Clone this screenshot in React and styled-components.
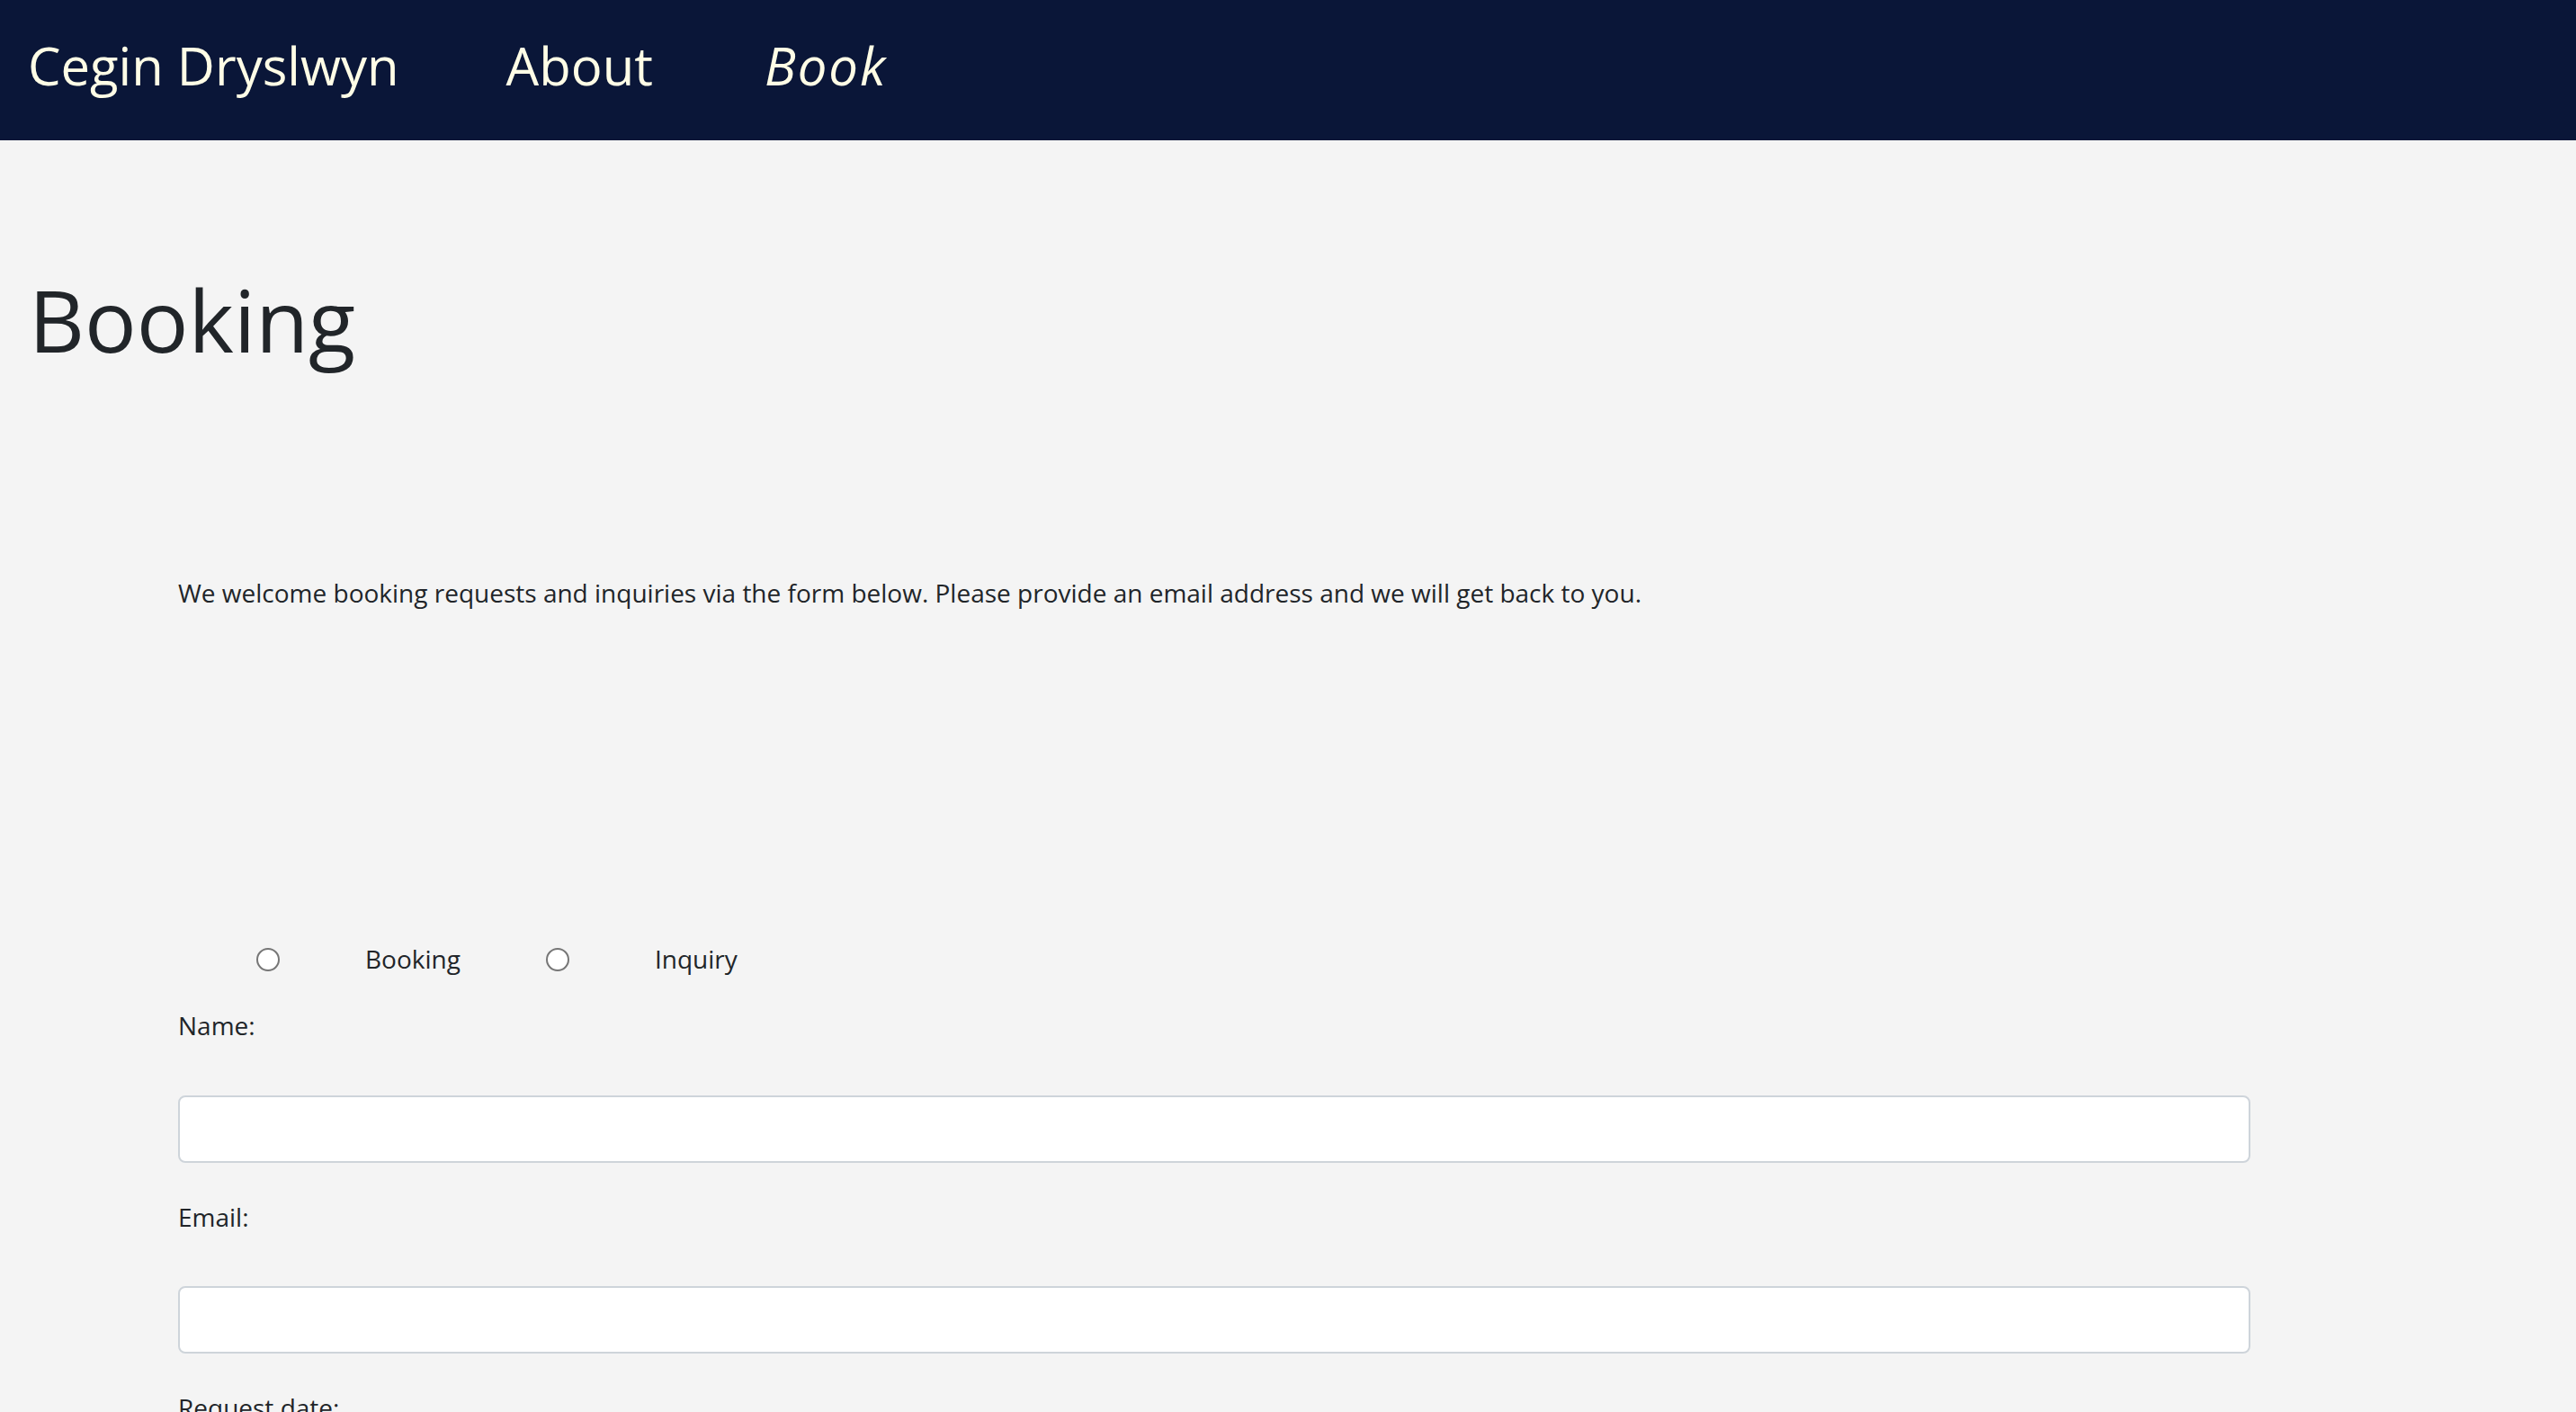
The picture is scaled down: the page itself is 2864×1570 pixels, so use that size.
import styled, { createGlobalStyle } from 'styled-components';

const GlobalStyle = createGlobalStyle`
  html, body {
    margin: 0;
    padding: 0;
    background: #f4f4f4;
  }
  body {
    font-family: "Open Sans", "Noto Sans", sans-serif;
    color: #212529;
  }
  * {
    box-sizing: border-box;
  }
`;

const Navbar = styled.nav`
  height: 156px;
  background-color: #0a1638;
  display: flex;
  align-items: flex-start;
  gap: 119px;
  padding: 29px 0 0 31px;
`;

const NavLink = styled.a`
  font-size: 58px;
  line-height: 87px;
  color: #fffde6;
  text-decoration: none;
  cursor: pointer;
  ${(p) =>
    p.$active &&
    `
    font-style: italic;
    margin-left: 5px;
    letter-spacing: 2px;
  `}
`;

const PageTitle = styled.h1`
  margin: 139px 0 0;
  padding-left: 32px;
  font-size: 96px;
  line-height: 120px;
  font-weight: 400;
  color: #212529;
`;

const Content = styled.section`
  padding-left: 198px;
  width: 2502px;
`;

const Intro = styled.p`
  margin: 223px 0 0;
  font-size: 28px;
  line-height: 43.2px;
`;

const ChoiceRow = styled.div`
  margin-top: 364px;
  display: flex;
  align-items: center;
  gap: 95px;
  padding-left: 87px;
`;

const Radio = styled.input`
  appearance: none;
  width: 26px;
  height: 26px;
  margin: 0;
  border: 2px solid #767676;
  border-radius: 50%;
  background: #fff;
`;

const ChoiceLabel = styled.label`
  font-size: 28px;
  line-height: 43.2px;
`;

const FieldLabel = styled.label`
  display: block;
  font-size: 28px;
  line-height: 43.2px;
  margin-top: ${(p) => p.$top || '39px'};
  margin-bottom: 55px;
`;

const TextInput = styled.input`
  display: block;
  width: 100%;
  height: 75px;
  padding: 12px 24px;
  font-size: 32px;
  font-family: inherit;
  background: #fff;
  border: 2px solid #ced4da;
  border-radius: 8px;
  outline: none;
`;

const App = () => {
  return (
    <>
      <GlobalStyle />
      <Navbar>
        <NavLink>Cegin Dryslwyn</NavLink>
        <NavLink>About</NavLink>
        <NavLink $active>Book</NavLink>
      </Navbar>
      <PageTitle>Booking</PageTitle>
      <Content>
        <Intro>
          We welcome booking requests and inquiries via the form below. Please provide an email
          address and we will get back to you.
        </Intro>
        <form>
          <ChoiceRow>
            <Radio type="radio" name="kind" id="kind-booking" />
            <ChoiceLabel htmlFor="kind-booking">Booking</ChoiceLabel>
            <Radio type="radio" name="kind" id="kind-inquiry" />
            <ChoiceLabel htmlFor="kind-inquiry">Inquiry</ChoiceLabel>
          </ChoiceRow>
          <FieldLabel htmlFor="name" $top="31px">Name:</FieldLabel>
          <TextInput id="name" type="text" />
          <FieldLabel htmlFor="email">Email:</FieldLabel>
          <TextInput id="email" type="email" />
          <FieldLabel htmlFor="date">Request date:</FieldLabel>
          <TextInput id="date" type="text" />
        </form>
      </Content>
    </>
  );
};

export default App;
